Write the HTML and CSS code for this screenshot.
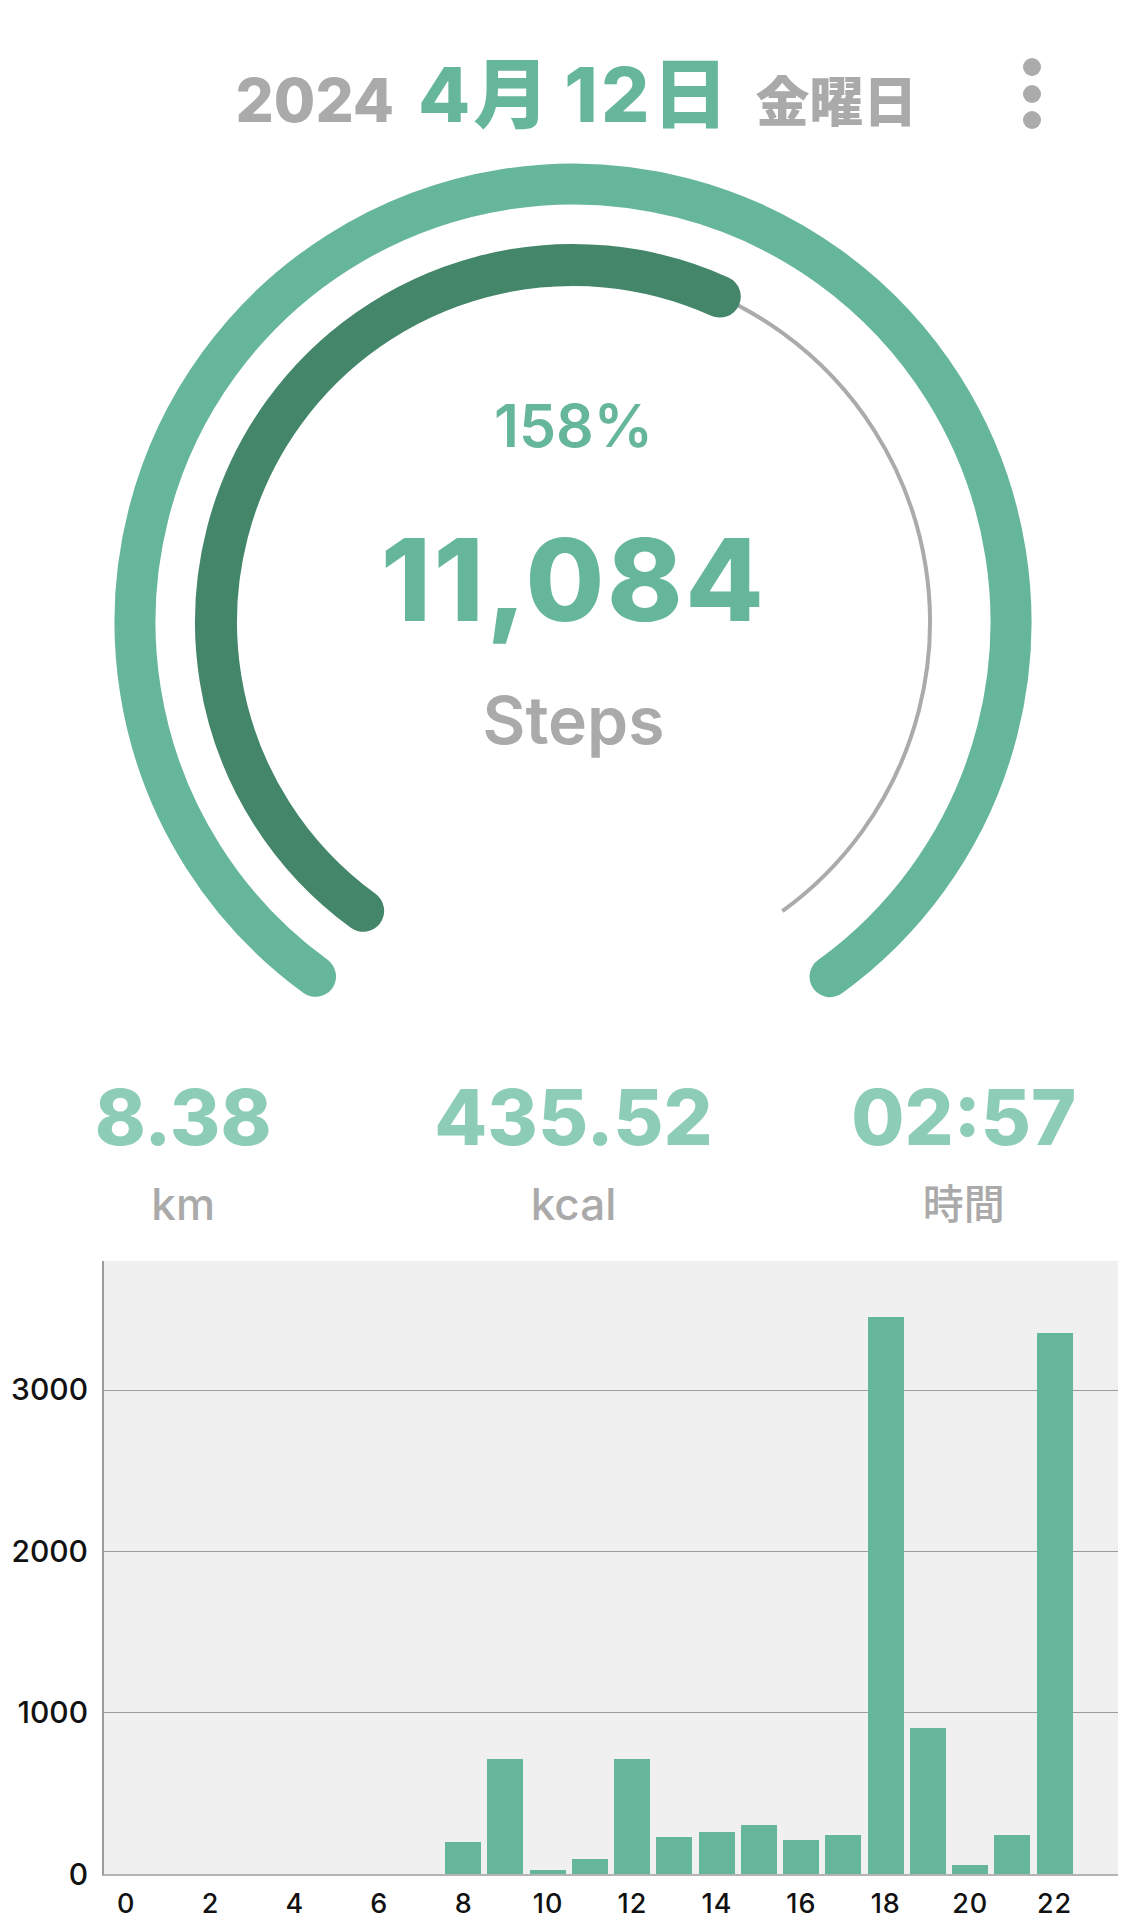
FILE: index.html
```html
<!DOCTYPE html>
<html lang="ja">
<head>
<meta charset="utf-8">
<title>Steps</title>
<link rel="stylesheet" href="styles.css">
</head>
<body>
<header class="header">
  <div class="title">
    <span class="year">2024</span>
    <span class="md md-month">4月</span>
    <span class="md md-day">12日</span>
    <span class="dow">金曜日</span>
  </div>
  <button class="kebab" aria-label="menu"><i></i><i></i><i></i></button>
</header>

<section class="gauge">
  <svg class="rings" width="1147" height="900" viewBox="0 0 1147 900">
    <circle cx="573" cy="482" r="438" fill="none" stroke="#66b69c" stroke-width="41" stroke-linecap="round" stroke-dasharray="2201.6 2752" transform="rotate(126 573 482)"/>
    <circle cx="573" cy="482" r="357" fill="none" stroke="#ababab" stroke-width="4" stroke-dasharray="1794.5 2243.1" transform="rotate(126 573 482)"/>
    <circle cx="573" cy="482" r="357" fill="none" stroke="#44866a" stroke-width="42" stroke-linecap="round" stroke-dasharray="1048 2243.1" transform="rotate(126 573 482)"/>
  </svg>
  <div class="readout">
    <div class="pct">158%</div>
    <div class="count">11,084</div>
    <div class="unit">Steps</div>
  </div>
</section>

<section class="stats">
  <div class="stat"><div class="val">8.38</div><div class="lab">km</div></div>
  <div class="stat"><div class="val">435.52</div><div class="lab">kcal</div></div>
  <div class="stat"><div class="val">02:57</div><div class="lab lab-ja">時間</div></div>
</section>

<section class="chart">
  <div class="yaxis">
    <span class="ylab" style="bottom:0%">0</span>
    <span class="ylab" style="bottom:26.27%">1000</span>
    <span class="ylab" style="bottom:52.54%">2000</span>
    <span class="ylab" style="bottom:78.80%">3000</span>
  </div>
  <div class="plot">
    <div class="grid" style="bottom:26.27%"></div>
    <div class="grid" style="bottom:52.54%"></div>
    <div class="grid" style="bottom:78.80%"></div>
    <div class="bars">
      <div class="slot"></div><div class="slot"></div><div class="slot"></div><div class="slot"></div>
      <div class="slot"></div><div class="slot"></div><div class="slot"></div><div class="slot"></div>
      <div class="slot"><div class="bar" style="height:5.23%"></div></div>
      <div class="slot"><div class="bar" style="height:18.76%"></div></div>
      <div class="slot"><div class="bar" style="height:0.58%"></div></div>
      <div class="slot"><div class="bar" style="height:2.39%"></div></div>
      <div class="slot"><div class="bar" style="height:18.76%"></div></div>
      <div class="slot"><div class="bar" style="height:5.96%"></div></div>
      <div class="slot"><div class="bar" style="height:6.78%"></div></div>
      <div class="slot"><div class="bar" style="height:7.99%"></div></div>
      <div class="slot"><div class="bar" style="height:5.57%"></div></div>
      <div class="slot"><div class="bar" style="height:6.38%"></div></div>
      <div class="slot"><div class="bar" style="height:90.86%"></div></div>
      <div class="slot"><div class="bar" style="height:23.75%"></div></div>
      <div class="slot"><div class="bar" style="height:1.39%"></div></div>
      <div class="slot"><div class="bar" style="height:6.38%"></div></div>
      <div class="slot"><div class="bar" style="height:88.26%"></div></div>
      <div class="slot"></div>
    </div>
  </div>
  <div class="xaxis">
    <span>0</span><span></span><span>2</span><span></span><span>4</span><span></span>
    <span>6</span><span></span><span>8</span><span></span><span>10</span><span></span>
    <span>12</span><span></span><span>14</span><span></span><span>16</span><span></span>
    <span>18</span><span></span><span>20</span><span></span><span>22</span><span></span>
  </div>
</section>
</body>
</html>
```

FILE: styles.css
```css
* { box-sizing: border-box; }
html, body { margin: 0; padding: 0; background: #ffffff; }
body {
  width: 1147px;
  font-family: Inter, "Noto Sans CJK JP", sans-serif;
  color: #aaaaaa;
  overflow: hidden;
}

/* header */
.header {
  display: grid;
  grid-template-columns: 1fr auto 1fr;
  height: 140px;
}
.title {
  grid-column: 2;
  display: flex;
  align-items: baseline;
  padding-top: 56px;
  padding-left: 6px;
  line-height: 1;
  white-space: nowrap;
}
.year { font-size: 60px; font-weight: 800; color: #aaaaaa; margin-right: 24px; }
.md { font-size: 76px; font-weight: 800; color: #66b69c; letter-spacing: 3px; }
.md-month { margin-right: 12px; }
.md-day { margin-right: 24px; }
.dow { font-size: 54px; font-weight: 900; color: #aaaaaa; font-family: "Noto Sans CJK JP", sans-serif; }
.kebab {
  grid-column: 3;
  justify-self: end;
  align-self: start;
  margin: 58px 106px 0 0;
  padding: 0;
  border: 0;
  background: none;
  display: flex;
  flex-direction: column;
  gap: 8.5px;
}
.kebab i {
  display: block;
  width: 18px;
  height: 18px;
  border-radius: 50%;
  background: #ababab;
}

/* gauge */
.gauge {
  position: relative;
  height: 900px;
}
.rings {
  position: absolute;
  left: 0;
  top: 0;
}
.readout {
  position: relative;
  display: flex;
  flex-direction: column;
  align-items: center;
  padding-top: 251px;
}
.pct {
  font-size: 59px;
  line-height: 70px;
  font-weight: 600;
  color: #66b69c;
}
.count {
  margin-top: 54px;
  font-size: 114px;
  line-height: 130px;
  font-weight: 800;
  color: #66b69c;
  letter-spacing: 2.5px;
}
.unit {
  margin-top: 37px;
  font-size: 66px;
  line-height: 76px;
  font-weight: 600;
  color: #aaaaaa;
}

/* stats */
.stats {
  display: grid;
  grid-template-columns: repeat(3, 1fr);
  margin: 0 -12px;
  height: 200px;
  padding-top: 37px;
  text-align: center;
}
.val {
  font-size: 77px;
  line-height: 80px;
  font-weight: 800;
  color: #8dcdb7;
}
.lab {
  margin-top: 22px;
  font-size: 44px;
  line-height: 50px;
  font-weight: 500;
  color: #aaaaaa;
}
.lab-ja {
  font-size: 41px;
}

/* chart */
.chart {
  display: grid;
  grid-template-columns: 102px 1016px;
  margin-top: 21px;
}
.yaxis {
  position: relative;
  height: 615px;
}
.ylab {
  position: absolute;
  right: 14px;
  transform: translateY(50%);
  margin-bottom: 2px;
  font-size: 30px;
  line-height: 32px;
  font-weight: 500;
  color: #111111;
}
.plot {
  position: relative;
  height: 615px;
  background: #f0f0f0;
  border-left: 2px solid #9c9c9c;
  border-bottom: 2px solid #b4b4b4;
}
.grid {
  position: absolute;
  left: 0;
  right: 0;
  height: 1px;
  background: #9c9c9c;
}
.bars {
  position: relative;
  display: flex;
  height: 100%;
}
.slot {
  flex: 1;
  display: flex;
  justify-content: center;
  align-items: flex-end;
}
.bar {
  width: 36px;
  background: #66b69c;
}
.xaxis {
  grid-column: 2;
  display: flex;
  padding-left: 3px;
  margin-top: 18px;
}
.xaxis span {
  flex: 1;
  text-align: center;
  font-size: 27px;
  line-height: 20px;
  font-weight: 500;
  letter-spacing: 1px;
  color: #111111;
}
```
